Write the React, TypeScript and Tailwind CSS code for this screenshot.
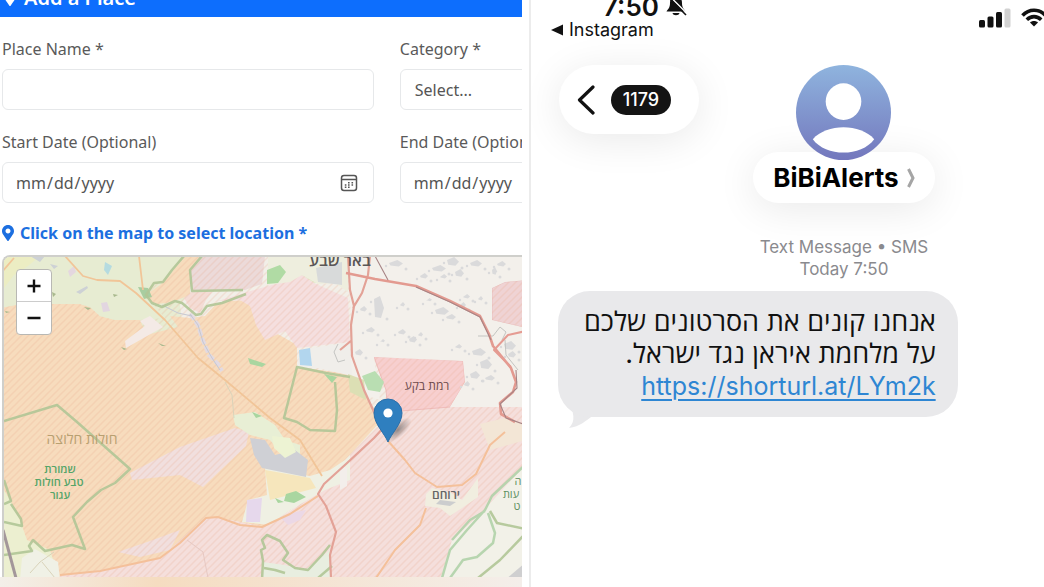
import type { ReactNode } from 'react';
import { FaMapMarkerAlt } from 'react-icons/fa';

type FieldProps = {
  id: string;
  label: string;
  children: ReactNode;
};

const inputStyles =
  'block h-[41px] w-full appearance-none rounded-md border border-[#e6e8ea] bg-white px-3 text-base text-[#555]';

function Field({ id, label, children }: FieldProps) {
  return (
    <div className="flex flex-col gap-2">
      <label htmlFor={id} className="text-base leading-6 text-[#5a5a5a]">
        {label}
      </label>
      {children}
    </div>
  );
}

function CalendarIcon() {
  return (
    <svg
      viewBox="0 0 18 18"
      className="pointer-events-none absolute right-4 top-3 size-[18px]"
      fill="none"
      stroke="#555"
    >
      <rect x="1.5" y="1.5" width="15" height="15" rx="2.5" strokeWidth="1.5" />
      <path d="M1.5 5.5h15" strokeWidth="1.5" />
      <path d="M8 8.8h1.6M11.5 8.8h1.6M4.8 11h1.6M8 11h1.6M11.5 11h1.6M4.8 13.3h1.6M8 13.3h1.6" strokeWidth="1.5" />
    </svg>
  );
}

function DateInput({ id }: { id: string }) {
  return (
    <div className="relative">
      <input
        id={id}
        type="date"
        className={`${inputStyles} [&::-webkit-calendar-picker-indicator]:opacity-0`}
      />
      <CalendarIcon />
    </div>
  );
}

// Small built-up areas: x, y, width, height
const buildings = [
  [374, 297, 10, 20], [366, 328, 9, 5], [398, 330, 8, 5], [409, 337, 8, 6],
  [418, 333, 5, 4], [389, 261, 14, 6], [420, 274, 8, 5], [432, 266, 14, 6],
  [447, 258, 12, 8], [455, 270, 9, 7], [470, 261, 12, 6], [435, 308, 14, 7],
  [446, 315, 10, 5], [460, 303, 6, 5], [463, 295, 7, 4], [478, 297, 5, 4],
  [472, 349, 14, 7], [480, 360, 12, 9], [470, 372, 10, 7], [464, 382, 6, 5],
  [485, 376, 10, 5], [504, 342, 12, 8], [360, 307, 7, 5], [355, 350, 8, 6],
  [497, 262, 9, 5], [492, 268, 5, 7], [440, 275, 7, 4], [380, 340, 5, 3],
  [508, 352, 8, 6], [455, 345, 7, 4], [400, 303, 5, 4], [426, 299, 6, 3],
];

function MapDrawing() {
  return (
    <svg
      viewBox="4 257 520 320"
      preserveAspectRatio="xMinYMin slice"
      className="block h-80 w-full"
      role="img"
      aria-label="Map"
    >
      <defs>
        <pattern id="hatch" width="7" height="7" patternUnits="userSpaceOnUse">
          <path d="M-1 8L8 -1M-1 1L1 -1M6 8L8 6" stroke="#e9a98f" strokeOpacity="0.22" strokeWidth="1.5" />
        </pattern>
        <radialGradient id="pinShadow">
          <stop offset="0" stopColor="#333" stopOpacity="0.5" />
          <stop offset="1" stopColor="#333" stopOpacity="0" />
        </radialGradient>
      </defs>
      <rect x="0" y="250" width="530" height="340" fill="#f2efe8" />

      {/* Farmland */}
      <path d="M0 250H215L200 275L180 305L185 345L0 330Z" fill="#e7ecd2" />
      <path d="M2 256H45L30 268L15 275L5 290Z" fill="#e9edc4" />
      <path d="M280 266L300 256L325 272L318 283L285 281Z" fill="#dfedc8" />
      {/* Desert */}
      <path d="M0 308L20 304H80L90 307L100 316L115 320H140L143 327L150 334L178 327L170 316L190 318L205 316L215 305L228 301L250 300L262 320L276 333L297 345V367L350 374L365 395L382 420L345 460L320 490L290 510L265 527L215 517L170 555L130 580H0Z" fill="#f7dcbd" />
      <path d="M172 302L150 305L143 297L160 285L186 256H200L190 272V295Z" fill="#f7dcbd" />
      {/* Training areas */}
      <path d="M200 256H265L262 284L245 290L192 291L190 270Z" fill="#ecdad9" />
      <path d="M184 298L192 292L212 292L206 300L200 313L190 308Z" fill="#f4dcd5" />
      <path d="M218 301L247 292L275 284L302 275L316 284L348 298L350 342L297 348L285 331L265 340L256 325L250 306L240 300Z" fill="#f5dfdf" />
      <path d="M60 576L100 570L160 558L205 518L215 517L265 527L318 493L350 455L385 420L395 412L440 407H526V580H56Z" fill="#f5dfdc" />
      <path d="M130 473L180 447L235 428L249 432L246 446L203 487L180 475L132 480Z" fill="#f1dfde" />
      <path d="M118 552L150 541L180 530L170 550L140 557Z" fill="#f1dfde" />
      <path d="M374 357L400 357L463 361L465 382L450 407L388 412L386 390Z" fill="#f7cfcf" stroke="#efbcbb" />
      <path d="M492 288L505 282L526 280V328L492 320Z" fill="#efd3d4" stroke="#e9bfbf" />
      <path d="M0 250H530V580H0Z" fill="url(#hatch)" />

      {/* Cleared patches without hatching */}
      <path d="M0 250H186L170 275L143 292L165 318L140 320L115 320L100 316L90 307L80 304H20L0 308Z" fill="#e7ecd2" />
      <path d="M2 256H40L28 266L14 275L4 288Z" fill="#ecedc3" />
      <path d="M140 321L145 326L125 341L126 348L163 327L150 316Z" fill="#f4eae6" />
      <path d="M268 256H348V292L335 283L318 284L302 275L290 282L268 285Z" fill="#eeeede" />
      <path d="M348 256H526V280L505 282L492 288V320L526 328V407H450L465 382L463 361L374 357L380 400L365 395L350 374L352 340Z" fill="#f3f0eb" />
      <path d="M300 350L350 342L352 376L318 368H297Z" fill="#f0eeea" />
      <path d="M233 415L255 412L275 425L285 440L300 445L300 458L285 458L270 440L250 435L235 425Z" fill="#e8efd5" />
      <path d="M265 468L310 476L330 470L345 460L350 455V480L325 490L290 510L270 525L242 522L248 500L267 495Z" fill="#eff0e3" />
      <path d="M4 490L10 500L20 520L27 540L50 550L60 580H4Z" fill="#ecefd0" />
      <path d="M22 558L35 549L58 562L60 580H20Z" fill="#f0f1e6" />
      <path d="M426 494L432 488L450 492L462 500L478 478V497L462 508L450 516L440 508L425 506Z" fill="#f1eee0" />
      <path d="M480 424L505 418L526 425V440L490 450Z" fill="#f3e6d6" />
      <path d="M440 580L452 540L482 512L526 464V580Z" fill="#f2f1e8" />
      <path d="M262 580V562L285 565L305 570L330 550V580Z" fill="#e8eee0" />
      <path d="M340 466L347 468V486L340 490Z" fill="#f3eeeb" />

      {/* Land use */}
      <path d="M250 438L265 440L275 455L295 450L308 460L306 477L262 468L254 455Z" fill="#cfd0d5" />
      <path d="M265 470L310 478L316 488L270 500Z" fill="#f6e6bc" />
      <path d="M272 436L290 438L296 452L285 458L274 448Z" fill="#edf3d3" />
      <path d="M247 500L262 498L260 522H246Z" fill="#e6d8ec" />
      <path d="M280 517L296 512L306 510L300 520L288 525Z" fill="#ebd8e6" />
      <path d="M299 350L310 348L312 366L300 365Z" fill="#b2d6ee" />
      <path d="M316 268L342 262V285L318 282Z" fill="#d8dada" />
      <path d="M267 270L280 265L286 272L278 283L267 284Z" fill="#b0dba4" />
      <path d="M362 376L375 371L384 382L380 392L368 390Z" fill="#b9deb2" />
      <path d="M348 374L364 380L366 400L350 392Z" fill="#dcdfb4" />
      <path d="M286 494L296 491L306 497L294 503L284 501ZM275 498L284 502L278 503ZM248 358L266 364L262 367L250 364ZM252 412L262 416L256 418ZM324 374L337 377L332 383Z" fill="#a9d6a0" />
      <path d="M138 287L148 288L152 297L144 299Z" fill="#a9cda0" />
      <path d="M105 262L112 266L108 275L104 270Z" fill="#b5dbe0" />
      <path d="M101 303L107 302L110 311L103 312Z" fill="#e2d6e0" />
      <path d="M68 271L74 266L76 272L70 277Z" fill="#e4d7df" />
      <path d="M76 292L87 286L88 288L80 294ZM50 264L58 266L54 269ZM30 256L45 256L40 262Z" fill="#cdd1d5" />
      <path d="M84 307L91 308L88 310ZM121 347L127 349L124 350ZM158 343L166 346L162 346ZM52 292L56 294L53 297ZM113 294L118 295L114 297ZM5 311L10 312L6 313Z" fill="#a9b98e" />
      <path d="M440 500L456 502L450 506L436 504Z" fill="#cccdce" />
      <path d="M505 580L526 562V580Z" fill="#cfcfd0" />
      {buildings.map(([x, y, width, height]) => (
        <g key={`${x}-${y}`} fill="#dadadb">
          <path d={`M${x} ${y + 2}l${width * 0.6} -3l${width * 0.4} ${height * 0.6}l${-width * 0.3} ${height * 0.5}l${-width * 0.6} -1z`} />
          <circle cx={x + width + 3} cy={y + height + 2} r="1.5" />
          <circle cx={x - 3} cy={y + 5} r="1.2" />
        </g>
      ))}

      {/* Streams */}
      <path d="M190 314L198 325L202 338L209 355L218 364L222 371" fill="none" stroke="#e2dae2" strokeWidth="4" strokeDasharray="7 2" />
      <path d="M190 314L198 325L203 342L212 358L220 370M162 305L178 313L192 316" fill="none" stroke="#c6c8d2" />
      <path d="M338 344L334 352L338 362L345 360M478 336L493 336L500 327L506 332L502 340M505 340L506 355L518 370" fill="none" stroke="#c3c4c1" />

      {/* Reserve borders */}
      <g fill="none" stroke="#b0c596" strokeWidth="2.5" strokeLinejoin="round" strokeOpacity="0.9">
        <path d="M4 421L57 405L77 422L130 469L115 483L101 490L87 502L73 517L85 549L72 545L45 551L33 540L29 546L32 551L4 555" />
        <path d="M4 480L11 501L4 504M11 504L21 519L22 526L4 522" />
        <path d="M202 256L190 270L192 291L243 290" />
        <path d="M184 256L172 270L163 282L154 283L146 295L152 303L162 307L175 301L182 303L196 315L201 314L207 306L222 303L246 294" />
        <path d="M350 377L326 373L297 367L284 418L297 422L310 430L335 431L337 410L335 382" />
        <path d="M262 580L263 561L261 550L265 548L262 540L267 535L280 541L288 553L283 560L295 568L308 570L322 555L330 545" />
        <path d="M264 568L275 570L285 573M318 578L332 566" />
        <path d="M442 578L450 550L467 530L485 510L492 496L526 464M450 578L463 560L477 557L493 543L495 533L488 513M452 540L470 520L485 511" stroke="#b0d2a8" />
        <path d="M478 578L500 560L526 533M490 511L497 523L526 529" />
      </g>

      {/* Roads */}
      <g fill="none" strokeLinejoin="round">
        <path d="M65 256L83 276L97 280L120 281L136 293L165 320L198 358L225 380L270 418L300 440L322 476M139 256L143 290M2 272L14 258" stroke="#f1c598" strokeWidth="1.8" />
        <path d="M60 575L100 571L160 558L180 543L206 518L218 517L240 525L262 527L290 514L318 496M388 441L405 460L415 473L437 487L462 485L476 474L490 445L505 432M426 508L420 525L395 550L376 578" stroke="#f4c09a" strokeWidth="2" />
        <path d="M348 256L350 290L354 306L351 325L352 356L364 390L374 412L386 432M386 425L374 438L346 464L324 484L318 494L326 506L336 532L330 555L331 578M370 256L368 275L362 293L353 308M352 340L340 350" stroke="#e3a297" strokeWidth="2.2" />
        <path d="M346 273L375 279L416 286L450 301L480 316L489 334L493 346L511 368L516 382L513 392L500 403L501 414L515 422" stroke="#e39a90" strokeWidth="2.6" />
        <path d="M375 256L388 280M416 287L450 302L480 317L491 340M516 370L517 388L500 404L506 418L526 425" stroke="#a78485" strokeWidth="1.1" />
        <path d="M526 331L508 335L494 350L511 367" stroke="#e59b92" strokeWidth="2" />
        <path d="M187 540L203 552L208 578" stroke="#e6c8c2" />
        <path d="M3 530L16 578" stroke="#a3979a" strokeWidth="3" />
        <path d="M54 552L40 562L30 573M42 562L55 578M225 382L232 395L234 418" stroke="#d9d3ba" />
      </g>

      {/* Place names */}
      <g textAnchor="middle" direction="rtl" fontFamily='"Open Sans", "Liberation Sans", sans-serif'>
        <text x="340" y="266" fontSize="16" fontWeight="600" fill="#5a5656">באר שבע</text>
        <text x="427" y="390" fontSize="12" fill="#6d4a4b">רמת בקע</text>
        <text x="82" y="444" fontSize="14" fill="#b8a071">חולות חלוצה</text>
        <g fontSize="11" fontWeight="600" fill="#55a569">
          <text x="60" y="473">שמורת</text>
          <text x="59" y="486">טבע חולות</text>
          <text x="60" y="499">עגור</text>
        </g>
        <text x="446" y="499" fontSize="12" fontWeight="600" fill="#666">ירוחם</text>
        <g fontSize="11" fill="#5c8f5f">
          <text x="518" y="485">ה</text>
          <text x="511" y="498">עות</text>
          <text x="517" y="510">ט</text>
        </g>
      </g>

      {/* Pin */}
      <ellipse cx="398" cy="430" rx="17" ry="7" transform="rotate(-42 398 430)" fill="url(#pinShadow)" />
      <path d="M388 442C385 434 374 424 374 413A14 14 0 0 1 402 413C402 424 391 434 388 442Z" fill="#2f7fbf" stroke="#2a6fa9" />
      <circle cx="388" cy="413" r="4.6" fill="#fff" />
    </svg>
  );
}

function PlaceForm() {
  return (
    <section className="h-full w-1/2 overflow-hidden bg-white font-['Noto_Sans','Open_Sans',sans-serif]">
      <header className="-mt-6 flex h-[41px] items-start gap-2 bg-[#0d6efd] px-1 pt-1.5 text-white">
        <FaMapMarkerAlt className="mt-2 h-4 w-3" />
        <h1 className="text-xl leading-8 font-semibold">Add a Place</h1>
      </header>
      <form className="flex flex-col pt-5 pl-0.5">
        <div className="grid w-[148%] grid-cols-2 gap-x-[26px] gap-y-5">
          <Field id="place-name" label="Place Name *">
            <input id="place-name" type="text" className={inputStyles} />
          </Field>
          <Field id="category" label="Category *">
            <select id="category" className={`${inputStyles} indent-0.5`}>
              <option>Select...</option>
            </select>
          </Field>
          <Field id="start-date" label="Start Date (Optional)">
            <DateInput id="start-date" />
          </Field>
          <Field id="end-date" label="End Date (Optional)">
            <DateInput id="end-date" />
          </Field>
        </div>
        <p className="mt-[18px] flex items-center gap-1.5 text-base leading-6 font-bold text-[#1c6fe0]">
          <FaMapMarkerAlt className="h-4 w-3" />
          Click on the map to select location *
        </p>
        {/* Map */}
        <div className="relative mt-2.5 overflow-hidden rounded-tl-lg border-t-2 border-l-2 border-[#cfcfcb]">
          <MapDrawing />
          <div className="absolute top-3 left-3 flex w-9 flex-col overflow-hidden rounded-sm border border-[#b8b8b4] bg-white">
            <button type="button" aria-label="Zoom in" className="flex h-8 items-center justify-center border-b border-[#ccc]">
              <svg viewBox="0 0 14 14" className="size-3.5" stroke="#111" strokeWidth="2.4">
                <path d="M7 0.5v13M0.5 7h13" />
              </svg>
            </button>
            <button type="button" aria-label="Zoom out" className="flex h-8 items-center justify-center">
              <svg viewBox="0 0 14 14" className="size-3.5" stroke="#111" strokeWidth="2.4">
                <path d="M0.5 7h13" />
              </svg>
            </button>
          </div>
        </div>
      </form>
      <div className="h-3 bg-linear-to-r from-[#f3efe9] via-[#f5dcc0] via-30% to-[#f4eeea]" />
    </section>
  );
}

function StatusBar() {
  return (
    <div className="-mt-2 flex justify-between pl-5">
      <div className="flex flex-col items-start">
        <div className="flex h-7 items-center gap-1.5 pl-[52px] text-[26px] font-semibold">
          <span>7:50</span>
          <svg viewBox="0 0 22 22" className="size-[22px]">
            <path d="M11 1C7 1 5 4 5 8C5 13 3 14 1.500 16.500H20.500C19 14 17 13 17 8C17 4 15 1 11 1ZM7.500 18H14.500C14 21 8 21 7.500 18Z" fill="#111" />
            <path d="M3.500 0L22.500 19" stroke="#fff" strokeWidth="1.400" />
            <path d="M2 1L21 20" stroke="#111" strokeWidth="1.600" />
          </svg>
        </div>
        <a href="#instagram" className="flex h-5 items-center gap-1.5 text-lg">
          <svg viewBox="0 0 12 12" className="size-3">
            <path d="M0 6L12 0.500V11.500Z" fill="#111" />
          </svg>
          Instagram
        </a>
      </div>
      <div className="flex items-start gap-2.5 pt-4 pr-[110px]">
        <svg viewBox="0 0 32 20" className="h-5 w-8" fill="#111">
          <rect x="0" y="12" width="6" height="7.500" rx="1.500" />
          <rect x="8.500" y="8.500" width="6" height="11" rx="1.500" />
          <rect x="17" y="4" width="6" height="15.500" rx="1.500" />
          <rect x="25.500" y="0.500" width="6" height="19" rx="1.500" fill="#d2d2d2" />
        </svg>
        <svg viewBox="0 0 26 19" className="h-[19px] w-[26px]" fill="none" stroke="#111" strokeWidth="3.600">
          <path d="M1.500 7.500C8 0.500 18 0.500 24.500 7.500" />
          <path d="M5.800 11.700C10 7.600 16 7.600 20.200 11.700" />
          <path d="M9 14.500C11 12.500 15 12.500 17 14.500L13 18.500Z" fill="#111" stroke="none" />
        </svg>
      </div>
    </div>
  );
}

function ContactHeader() {
  return (
    <header className="mt-[25px] grid grid-cols-[1fr_auto_1fr] items-start">
      <button
        type="button"
        aria-label="Back, 1179 unread"
        className="ml-7 flex h-[69px] w-[140px] items-center gap-4 rounded-full bg-white pl-[18px] shadow-[0_6px_40px_rgba(0,0,0,0.09)]"
      >
        <svg viewBox="0 0 18 30" className="h-[30px] w-[18px]" fill="none" stroke="#111" strokeWidth="3.200" strokeLinecap="round" strokeLinejoin="round">
          <path d="M16 2L2.500 15L16 28" />
        </svg>
        <span className="flex h-[30px] w-[60px] items-center justify-center rounded-full bg-[#141414] text-lg font-medium text-white">
          1179
        </span>
      </button>
      <div className="flex flex-col items-center">
        <svg viewBox="0 0 96 96" className="relative z-10 size-[95px]">
          <defs>
            <linearGradient id="avatar" x1="0" y1="0" x2="0" y2="1">
              <stop offset="0" stopColor="#8fb4de" />
              <stop offset="1" stopColor="#7377bd" />
            </linearGradient>
          </defs>
          <circle cx="48" cy="48" r="48" fill="url(#avatar)" />
          <ellipse cx="48" cy="37" rx="18" ry="18.500" fill="#fff" />
          <path d="M17 75C31 59 65 59 79 75C66 93 30 93 17 75Z" fill="#fff" />
        </svg>
        <button
          type="button"
          className="-mt-2 flex h-[51px] items-center gap-2 rounded-full bg-white px-5 text-[26px] font-bold text-black shadow-[0_6px_40px_rgba(0,0,0,0.09)]"
        >
          BiBiAlerts
          <svg viewBox="0 0 8 20" className="h-5 w-2" fill="none" stroke="#a5a5a5" strokeWidth="3">
            <path d="M1.500 1L6 10L1.500 19" />
          </svg>
        </button>
      </div>
    </header>
  );
}

function Messages() {
  return (
    <section className="h-full min-w-0 flex-1 overflow-hidden border-l-2 border-[#ececec] bg-white font-[Inter,sans-serif] text-[#111]">
      <div className="w-[122%]">
        <StatusBar />
        <ContactHeader />
        <div className="mt-[33px] text-center text-[17px] leading-[22px] text-[#8a8a8e]">
          <p>Text Message • SMS</p>
          <p>Today 7:50</p>
        </div>
        {/* Message bubble */}
        <div className="relative mt-[11px] ml-[27px] w-fit">
          <svg viewBox="0 0 40 30" className="absolute -bottom-3 left-2 h-[30px] w-10" fill="#e9e9eb">
            <path d="M2 0C8 14 10 22 3 29C14 28 20 21 27 17L40 16V0Z" />
          </svg>
          <div
            dir="rtl"
            className="relative rounded-[32px] bg-[#e9e9eb] py-[15px] pr-[22px] pl-[26px] font-[Inter,'Open_Sans','Liberation_Sans',sans-serif] text-[27px] leading-8"
          >
            <p>אנחנו קונים את הסרטונים שלכם</p>
            <p>על מלחמת איראן נגד ישראל.</p>
            <p className="text-[25px]/8">
              <a href="https://shorturl.at/LYm2k" className="text-[#2e86d3] underline decoration-2 underline-offset-4">
                https://shorturl.at/LYm2k
              </a>
            </p>
          </div>
        </div>
      </div>
    </section>
  );
}

function App() {
  return (
    <main className="flex h-screen w-full gap-[7px] overflow-hidden bg-white">
      <PlaceForm />
      <Messages />
    </main>
  );
}

export default App;
